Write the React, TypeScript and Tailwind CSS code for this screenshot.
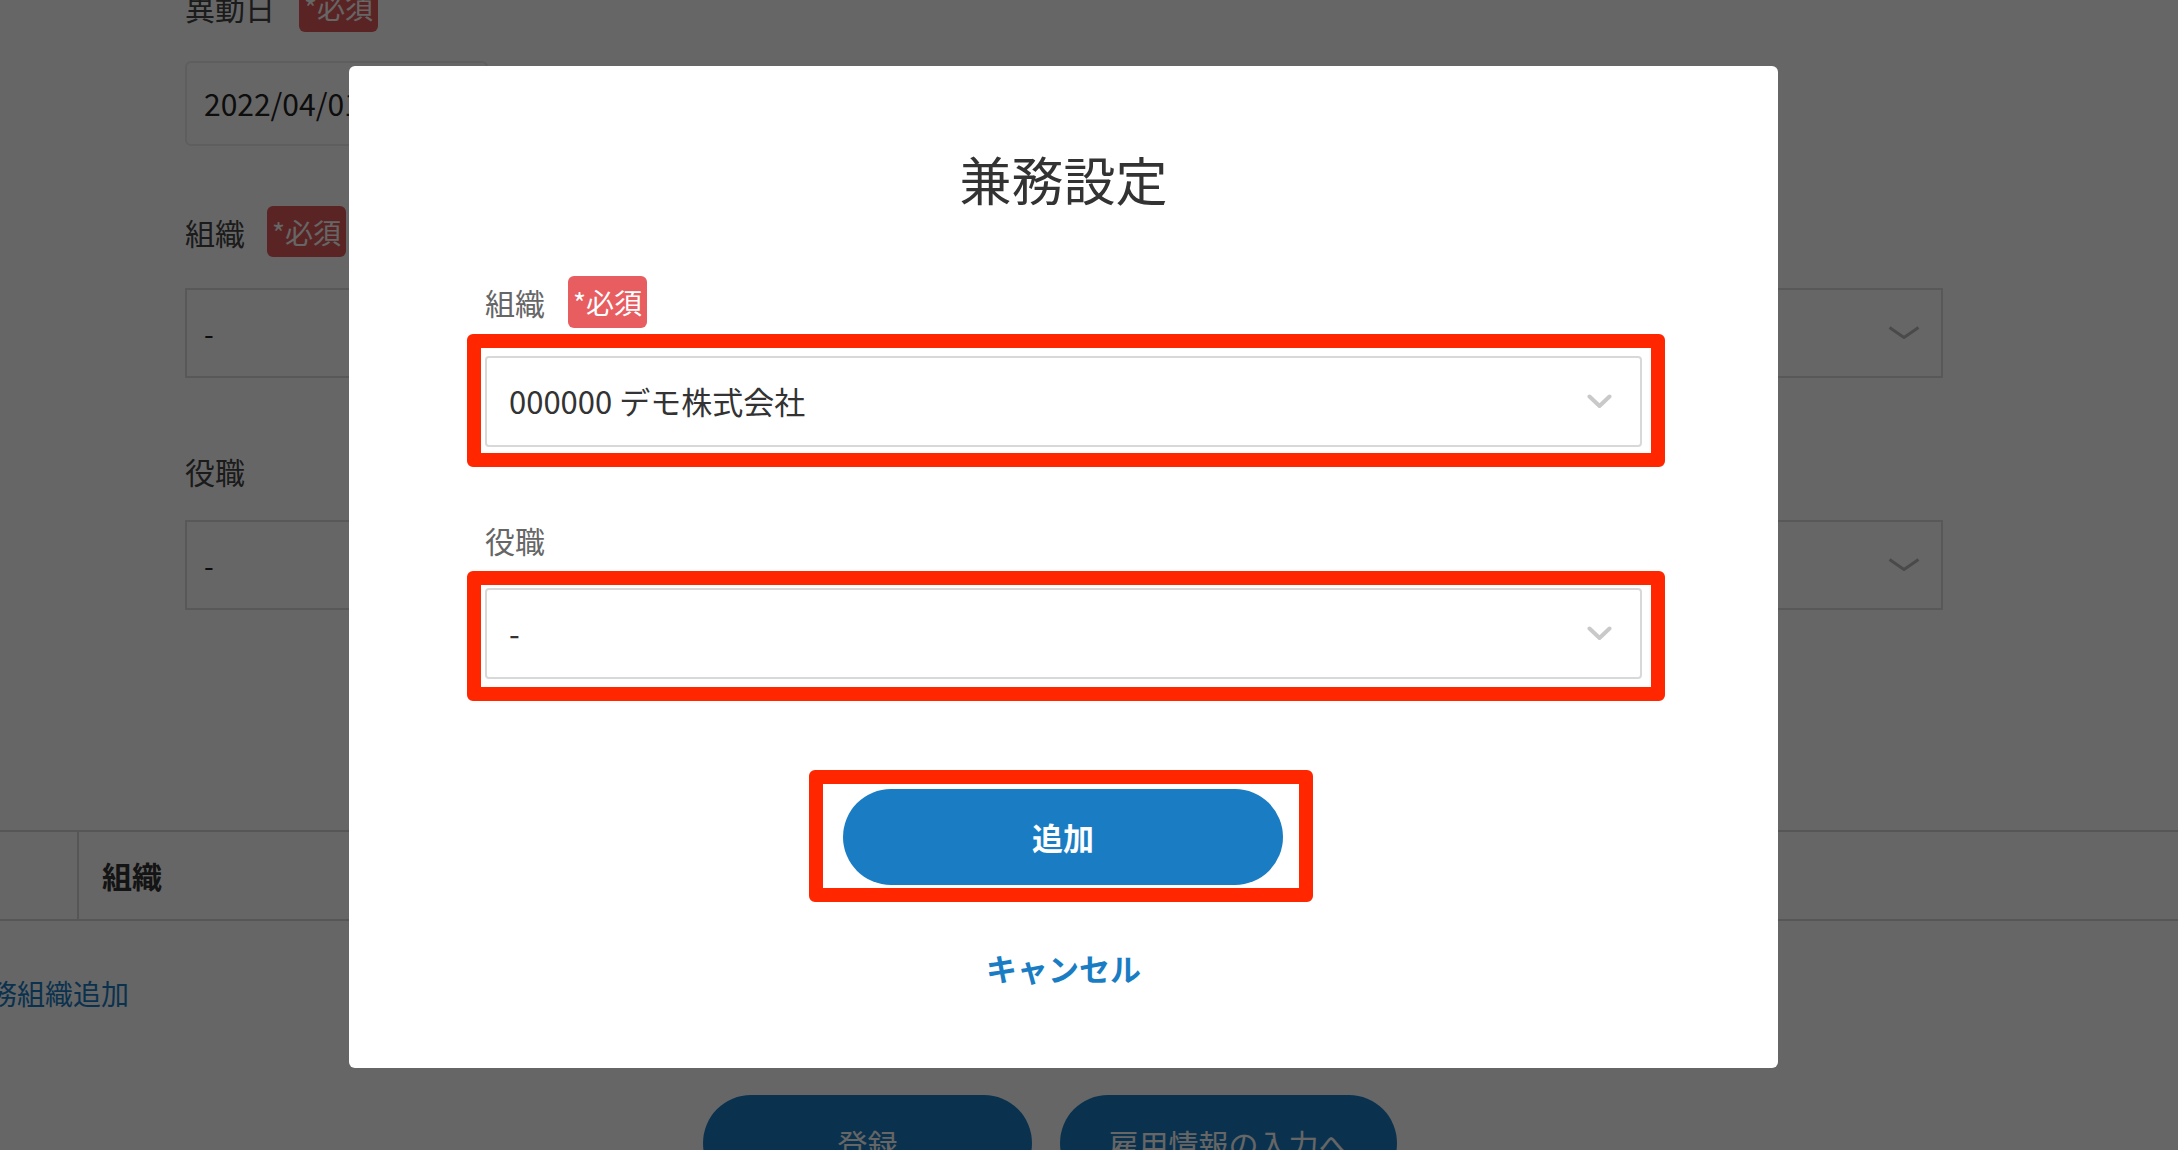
import React from 'react';

const font = "font-['Noto_Sans_CJK_JP','Noto_Sans',sans-serif]";

function Chevron({ className }: { className?: string }): React.JSX.Element {
  return (
    <svg viewBox="0 0 25 15" className={className} fill="none">
      <polyline points="2.5,2.5 12.5,12 22.5,2.5" stroke="currentColor" strokeWidth="4" strokeLinecap="round" strokeLinejoin="round" />
    </svg>
  );
}

function ThinChevron(): React.JSX.Element {
  return (
    <svg viewBox="0 0 32 14" className="h-[14px] w-[32px] text-[#b8b8b8]" fill="none">
      <polyline points="1.5,1.5 16,11.5 30.5,1.5" stroke="currentColor" strokeWidth="3" strokeLinejoin="round" />
    </svg>
  );
}

function Required({ size = 'md' }: { size?: 'md' | 'lg' }): React.JSX.Element {
  return (
    <span
      className={
        size === 'lg'
          ? 'flex h-[51px] items-center rounded-[6px] bg-[#e05a5a] px-[5px] text-[28px] leading-none text-white'
          : 'flex h-[52px] items-center rounded-[6px] bg-[#e85d5f] px-[5px] text-[28px] leading-none text-white'
      }
    >
      *必須
    </span>
  );
}

function BackgroundPage(): React.JSX.Element {
  return (
    <div className="flex flex-col">
      <div className="pl-[185px]">
        <div className="mt-[-19px] flex items-center gap-[24px]">
          <span className="text-[30px] leading-[40px] text-[#444]">異動日</span>
          <Required size="lg" />
        </div>
        <div className="mt-[29px] flex h-[85px] w-[303px] items-center rounded-[6px] border-2 border-[#ececec] px-[17px] text-[30px] text-[#222]">
          2022/04/01
        </div>

        <div className="mt-[60px] flex items-center gap-[22px]">
          <span className="text-[30px] leading-[40px] text-[#444]">組織</span>
          <Required size="lg" />
        </div>
        <div className="mt-[31px] flex h-[90px] w-[1758px] items-center justify-between border-2 border-[#dcdcdc] pl-[17px] pr-[21px] text-[28px] text-[#222]">
          <span>-</span>
          <ThinChevron />
        </div>

        <div className="mt-[73px] text-[30px] leading-[40px] text-[#444]">役職</div>
        <div className="mt-[29px] flex h-[90px] w-[1758px] items-center justify-between border-2 border-[#dcdcdc] pl-[17px] pr-[21px] text-[28px] text-[#222]">
          <span>-</span>
          <ThinChevron />
        </div>
      </div>

      <div className="mt-[220px] flex h-[91px] border-y-2 border-[#d6d6d6]">
        <div className="w-[79px] border-r-2 border-[#d6d6d6]" />
        <div className="flex items-center pl-[23px] text-[30px] font-bold text-[#333]">組織</div>
      </div>

      <div className="ml-[-39px] mt-[52px] text-[28px] leading-[40px] text-[#1a7dc4]">兼務組織追加</div>

      <div className="mt-[82px] flex gap-[28px] pl-[703px]">
        <button type="button" className="h-[96px] w-[329px] rounded-full bg-[#1a7dc4] text-[30px] text-white">
          登録
        </button>
        <button type="button" className="h-[96px] w-[337px] rounded-full bg-[#1a7dc4] text-[30px] text-white">
          雇用情報の入力へ
        </button>
      </div>
    </div>
  );
}

function SelectBox({ value }: { value: string }): React.JSX.Element {
  return (
    <div className="flex h-[91px] items-center justify-between rounded-[4px] border-2 border-[#d8d8d8] pl-[22px] pr-[28px] text-[31px] text-[#333]">
      <span>{value}</span>
      <Chevron className="h-[15px] w-[25px] text-[#c9c9c9]" />
    </div>
  );
}

function ConcurrentPostModal(): React.JSX.Element {
  return (
    <div className="ml-[349px] mt-[66px] h-[1002px] w-[1429px] rounded-[6px] bg-white">
      <h2 className="pt-[81px] text-center text-[52px] font-normal leading-[64px] text-[#333]">兼務設定</h2>

      <div className="ml-[136px] mt-[65px] flex items-center gap-[23px]">
        <span className="text-[30px] leading-[40px] text-[#666]">組織</span>
        <Required />
      </div>
      <div className="ml-[118px] mt-[6px] w-[1198px] rounded-[6px] border-[14px] border-[#ff2600] pb-[6px] pl-[4px] pr-[9px] pt-[8px]">
        <SelectBox value="000000 デモ株式会社" />
      </div>

      <div className="ml-[136px] mt-[53px] text-[30px] leading-[40px] text-[#666]">役職</div>
      <div className="ml-[118px] mt-[11px] w-[1198px] rounded-[6px] border-[14px] border-[#ff2600] pb-[8px] pl-[4px] pr-[9px] pt-[3px]">
        <SelectBox value="-" />
      </div>

      <div className="ml-[460px] mt-[69px] w-[504px] rounded-[6px] border-[14px] border-[#ff2600] pb-[3px] pl-[20px] pr-[16px] pt-[5px]">
        <button
          type="button"
          className="flex h-[96px] w-full items-center justify-center rounded-full bg-[#1a7dc4] text-[31px] font-bold text-white"
        >
          追加
        </button>
      </div>

      <div className="mt-[46px] text-center text-[31px] font-bold leading-[40px] text-[#1a7dc4]">キャンセル</div>
    </div>
  );
}

export default function App(): React.JSX.Element {
  return (
    <div className={`relative h-[1150px] w-[2178px] overflow-hidden bg-white ${font}`}>
      <BackgroundPage />
      <div className="absolute inset-0 bg-black/60">
        <ConcurrentPostModal />
      </div>
    </div>
  );
}
